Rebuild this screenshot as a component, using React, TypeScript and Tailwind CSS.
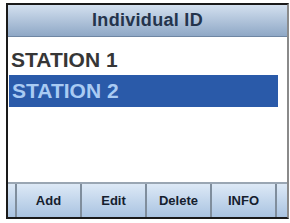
import React from "react";

const buttons = ["Add", "Edit", "Delete", "INFO"];

const App = () => {
    return (
        <div className="w-[290px] h-[223px] bg-white pt-[3px] pl-[6px] font-['Liberation_Sans',Arial,sans-serif]">
            <div className="flex flex-col w-[283px] h-[216px] border-2 border-[#1a1a1a] border-r-[#8a8a8a] bg-white">
                {/* header */}
                <div className="flex h-[32px] items-center justify-center border-b border-[#6f86a3] bg-gradient-to-b from-[#d3e0ef] to-[#8fa8c6]">
                    <span className="text-[18px] font-bold text-[#24344c] tracking-[0.3px]">Individual ID</span>
                </div>
                {/* list */}
                <div className="flex flex-1 flex-col pt-[7px] pl-[1px] pr-[9px]">
                    <div className="h-[31px] pl-[2px] leading-[31px] text-[21px] font-bold text-[#363636]">STATION 1</div>
                    <div className="h-[32px] pl-[3px] leading-[32px] text-[21px] font-bold text-[#a9cbf3] bg-[#2a5aa9]">STATION 2</div>
                </div>
                {/* softkeys */}
                <div className="flex h-[35px] border-t-2 border-[#9aa6b3] bg-gradient-to-b from-[#dde9f6] to-[#a9c3e1]">
                    <div className="w-[9px] border-r-2 border-[#7f8d9c]" />
                    {buttons.map((b) => (
                        <div
                            key={b}
                            className="flex w-[65px] items-center justify-center border-r-2 border-[#7f8d9c] text-[13px] font-bold text-[#15202e]"
                        >
                            {b}
                        </div>
                    ))}
                    <div className="flex-1" />
                </div>
            </div>
        </div>
    );
};

export default App;
